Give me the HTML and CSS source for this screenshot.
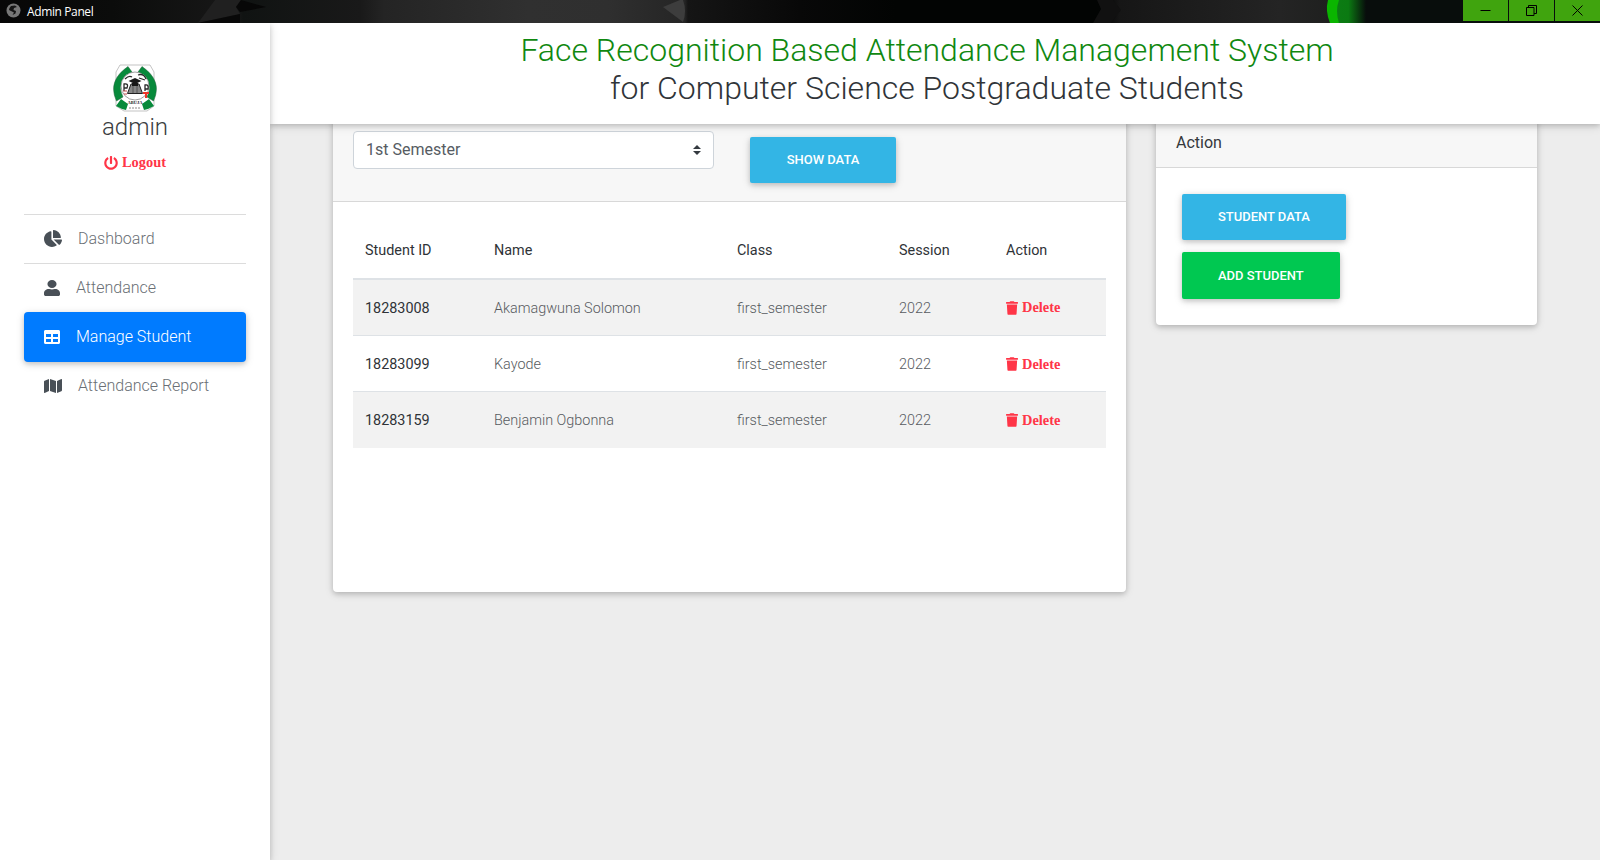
FILE: index.html
```html
<!DOCTYPE html>
<html lang="en">
<head>
<meta charset="utf-8">
<title>Admin Panel</title>
<link rel="stylesheet" href="styles.css">
</head>
<body>
<svg class="defs" width="0" height="0">
  <symbol id="trash" viewBox="0 0 448 512"><path d="M432 32H312l-9.4-18.7A24 24 0 0 0 281.100 0H166.800a23.720 23.720 0 0 0-21.400 13.300L136 32H16A16 16 0 0 0 0 48v32a16 16 0 0 0 16 16h416a16 16 0 0 0 16-16V48a16 16 0 0 0-16-16zM53.200 467a48 48 0 0 0 47.900 45h245.800a48 48 0 0 0 47.900-45L416 128H32z"/></symbol>
</svg>
<div class="titlebar">
  <svg class="titlebar-art" width="1600" height="23" viewBox="0 0 1600 23">
    <defs>
      <linearGradient id="base" x1="0" x2="1">
        <stop offset="0" stop-color="#070707"/><stop offset=".07" stop-color="#0b0c0b"/><stop offset=".148" stop-color="#181818"/><stop offset=".152" stop-color="#101312"/><stop offset=".225" stop-color="#191919"/><stop offset=".24" stop-color="#242424"/><stop offset=".33" stop-color="#303030"/><stop offset=".38" stop-color="#2f2f2f"/><stop offset=".428" stop-color="#252525"/><stop offset=".43" stop-color="#151515"/><stop offset=".5" stop-color="#080808"/><stop offset=".56" stop-color="#020403"/><stop offset=".688" stop-color="#020403"/><stop offset=".7" stop-color="#161616"/><stop offset=".8" stop-color="#242424"/><stop offset=".83" stop-color="#1f201f"/>
      </linearGradient>
      <linearGradient id="glow" x1="0" x2="1">
        <stop offset="0" stop-color="#0c7c14"/><stop offset=".45" stop-color="#0b7a12"/><stop offset="1" stop-color="#080d0c"/>
      </linearGradient>
    </defs>
    <rect width="1600" height="23" fill="url(#base)"/>
    <path d="M198 23L240 14L236 7L241 0H215z" fill="#202020"/>
    <path d="M198 23L240 14V23z" fill="#080808"/>
    <path d="M236 7L241 0L266 7L240 12z" fill="#070707"/>
    <path d="M663 7L680 0H683Q687 11 683 22z" fill="#3d3d3d"/>
    <path d="M1097 0H1113L1121 10L1111 23H1093L1101 9z" fill="#111"/>
    <rect x="1334" width="266" height="23" fill="#080d0c"/>
    <rect x="1334" width="32" height="23" fill="url(#glow)"/>
    <path d="M1328 0H1339Q1335 11 1339 23H1330Q1325 11 1328 0z" fill="#0ab500"/>
  </svg>
  <svg class="globe" width="15" height="15" viewBox="0 0 15 15"><circle cx="7.500" cy="7.500" r="7" fill="#777"/><path d="M5 3L9 2.500L11 4L8 5L7.500 7L10 8L9.500 10.500L6.500 12L8 9.500L3 7L3.500 5z" fill="#151515"/></svg>
  <span class="titlebar-name">Admin Panel</span>
  <div class="window-buttons">
    <span class="window-button"><svg width="11" height="11"><path d="M.500 5.500h10" stroke="#000"/></svg></span>
    <span class="window-button"><svg width="11" height="11" fill="none" stroke="#000"><path d="M.500 2.500h7.500v8h-7.500zM2.500 2.500v-2h8v8h-2.500"/></svg></span>
    <span class="window-button"><svg width="11" height="11"><path d="M.500.500l10 10M10.500.500l-10 10" stroke="#000"/></svg></span>
  </div>
</div>
<div class="app">
  <aside class="sidebar">
    <div class="profile">
      <svg class="logo" width="44" height="48" viewBox="0 0 44 48">
        <path d="M7 1H37L41 8V42L34 47H11L3 42V8z" fill="#fff" stroke="#aaa" stroke-width=".7"/>
        <path d="M15 2.500Q-6 17 3.500 37L10 33Q2 18 19 8zM29 2.500Q50 17 40.500 37L34 33Q42 18 25 8z" fill="#078a3b" stroke="#27633f" stroke-width=".5"/>
        <path d="M3 42L8 35L15 40L13 46Q8 45 3 42zM41 42L36 35L29 40L31 46Q36 45 41 42z" fill="#078a3b"/>
        <circle cx="22" cy="22" r="14" fill="#fff" stroke="#777" stroke-width=".7"/>
        <path d="M14.500 29.500L18 20H26L29.500 29.500z" fill="#888" stroke="#222"/>
        <path d="M20 21v8M24 21v8" stroke="#555"/>
        <path d="M15.500 17L22 14L28.500 17L22 20zM19 19h6v3h-6z" fill="#181818"/>
        <path d="M11 27V20q5-1 3 4h-3M12 15q4-4 7-2M25 11q6-2 8 4M26 14l6 2M32 27V21q4-1 3 4h-3" fill="none" stroke="#292929" stroke-width="1.300"/>
        <path d="M10 27h4M11 30h3" stroke="#c34c4c"/>
        <path d="M30 28h6v2h-2v4h-2v-4h-2z" fill="#ef3527"/>
        <text class="logo-text" x="22" y="39.500" text-anchor="middle">ABUJA</text>
        <path d="M16 44h12" stroke="#888" stroke-dasharray="2 1"/>
      </svg>
      <h4 class="user-name">admin</h4>
      <a class="danger-link logout"><svg width="14" height="14" viewBox="0 0 512 512"><path d="M400 54.100c63 45 104 118.600 104 201.900 0 136.800-110.800 247.700-247.500 248C120 504.300 8.200 393 8 256.400 7.900 173.100 48.900 99.300 111.800 54.200c11.700-8.300 28-4.800 35 7.700L162.600 90c5.900 10.500 3.100 23.800-6.600 31-41.500 30.800-68 79.600-68 134.900-.1 92.300 74.500 168.100 168 168.100 91.600 0 168.600-74.200 168-169.100-.3-51.800-24.700-101.800-68.100-134-9.700-7.200-12.400-20.500-6.500-30.900l15.800-28.100c7-12.400 23.200-16.100 34.800-7.800zM296 264V24c0-13.300-10.700-24-24-24h-32c-13.300 0-24 10.700-24 24v240c0 13.300 10.700 24 24 24h32c13.300 0 24-10.700 24-24z"/></svg>Logout</a>
    </div>
    <nav class="nav">
      <a class="nav-item ruled"><svg width="18" height="17" viewBox="0 0 544 512"><path d="M527.790 288H290.500l158.030 158.030c6.040 6.040 15.980 6.530 22.190.68 38.700-36.460 65.320-85.610 73.130-140.860 1.340-9.460-6.510-17.850-16.060-17.850zm-15.830-64.800C503.720 103.740 408.260 8.280 288.800.04 279.680-.59 272 7.100 272 16.240V240h223.770c9.140 0 16.820-7.680 16.190-16.800zM224 288V50.710c0-9.550-8.390-17.400-17.840-16.060C86.990 51.490-4.100 155.600.14 280.370 4.500 408.510 114.830 513.590 243.030 511.980c50.400-.63 96.970-16.870 135.260-44.030 7.900-5.600 8.420-17.230 1.570-24.080L224 288z"/></svg>Dashboard</a>
      <a class="nav-item"><svg width="16" height="16" viewBox="0 0 448 512" preserveAspectRatio="none"><path d="M224 256c70.700 0 128-57.300 128-128S294.700 0 224 0 96 57.300 96 128s57.300 128 128 128zm89.600 32h-16.700c-22.200 10.200-46.900 16-72.900 16s-50.600-5.800-72.900-16h-16.700C60.200 288 0 348.200 0 422.400V464c0 26.500 21.500 48 48 48h352c26.500 0 48-21.500 48-48v-41.600c0-74.200-60.200-134.400-134.400-134.400z"/></svg>Attendance</a>
      <a class="nav-item active"><svg width="16" height="16" viewBox="0 0 512 512"><path d="M464 32H48C21.490 32 0 53.490 0 80v352c0 26.510 21.490 48 48 48h416c26.510 0 48-21.490 48-48V80c0-26.510-21.490-48-48-48zM224 416H64v-96h160v96zm0-160H64v-96h160v96zm224 160H288v-96h160v96zm0-160H288v-96h160v96z"/></svg>Manage Student</a>
      <a class="nav-item"><svg width="18" height="16" viewBox="0 0 576 512"><path d="M0 117.660v346.320c0 11.320 11.430 19.060 21.940 14.860L160 416V32L20.120 87.950A32.006 32.006 0 0 0 0 117.660zM192 416l192 64V96L192 32v384zM554.060 33.160L416 96v384l139.880-55.950A31.996 31.996 0 0 0 576 394.340V48.020c0-11.320-11.430-19.060-21.940-14.860z"/></svg>Attendance Report</a>
    </nav>
  </aside>
  <div class="content">
    <header class="header">
      <h2 class="heading"><span class="heading-green">Face Recognition Based Attendance Management System</span><br>for Computer Science Postgraduate Students</h2>
    </header>
    <main class="main">
      <section class="card students">
        <div class="card-header filters">
          <div class="select">1st Semester<svg width="8" height="10" viewBox="0 0 4 5"><path fill="#343a40" d="M2 0L0 2h4zm0 5L0 3h4z"/></svg></div>
          <button class="btn">Show Data</button>
        </div>
        <div class="card-body">
          <table class="table">
            <colgroup><col class="col-id"><col class="col-name"><col class="col-class"><col class="col-session"><col></colgroup>
            <thead><tr><th>Student ID</th><th>Name</th><th>Class</th><th>Session</th><th>Action</th></tr></thead>
            <tbody>
              <tr><th>18283008</th><td>Akamagwuna Solomon</td><td>first_semester</td><td>2022</td><td><a class="danger-link"><svg width="12" height="14"><use href="#trash"/></svg>Delete</a></td></tr>
              <tr><th>18283099</th><td>Kayode</td><td>first_semester</td><td>2022</td><td><a class="danger-link"><svg width="12" height="14"><use href="#trash"/></svg>Delete</a></td></tr>
              <tr><th>18283159</th><td>Benjamin Ogbonna</td><td>first_semester</td><td>2022</td><td><a class="danger-link"><svg width="12" height="14"><use href="#trash"/></svg>Delete</a></td></tr>
            </tbody>
          </table>
        </div>
      </section>
      <section class="card actions">
        <div class="card-header">Action</div>
        <div class="card-body action-list">
          <button class="btn">Student Data</button>
          <button class="btn btn-green">Add Student</button>
        </div>
      </section>
    </main>
  </div>
</div>
</body>
</html>
```
FILE: styles.css
```css
* { box-sizing: border-box; }
body {
  margin: 0;
  height: 860px;
  overflow: hidden;
  display: flex;
  flex-direction: column;
  background: #ededed;
  color: #212529;
  font: 300 16px/1.5 Roboto, sans-serif;
}
svg { flex: none; }
.defs { position: absolute; }

.titlebar {
  position: relative;
  z-index: 4;
  height: 23px;
  display: flex;
  align-items: center;
  padding-left: 6px;
  color: #fff;
  background: #0a0a0a;
}
.titlebar-art { position: absolute; left: 0; top: 0; }
.globe { position: relative; top: -1px; }
.titlebar-name {
  position: relative;
  margin-left: 6px;
  font: 400 12px/23px "Open Sans", sans-serif;
  letter-spacing: -.38px;
}
.window-buttons {
  position: relative;
  margin-left: auto;
  align-self: flex-start;
  display: flex;
  gap: 1px;
}
.window-button {
  width: 45px;
  height: 21px;
  display: flex;
  align-items: center;
  justify-content: center;
  background: #40a40e;
}

.app { flex: 1; display: flex; min-height: 0; }
.sidebar {
  position: relative;
  z-index: 3;
  width: 270px;
  padding: 41px 24px 0;
  background: #fff;
  box-shadow: 0 2px 5px rgba(0,0,0,.16), 0 2px 10px rgba(0,0,0,.12);
}
.profile {
  height: 150px;
  display: flex;
  flex-direction: column;
  align-items: center;
}
.logo-text { font: 700 4.5px "Liberation Serif", serif; fill: #222; }
.user-name {
  margin: 1px 0 0;
  color: #3a3d41;
  font-size: 24px;
  font-weight: 300;
  line-height: 29px;
}
.danger-link {
  display: inline-flex;
  align-items: center;
  gap: 4px;
  color: #ff3547;
  fill: currentColor;
  font: 700 14.4px/21px "Liberation Serif", serif;
}
.logout { margin-top: 10px; }

.nav-item {
  display: flex;
  align-items: center;
  gap: 16px;
  height: 48px;
  padding-left: 20px;
  color: #6a6f75;
}
.nav-item svg { fill: #495057; }
.nav-item.ruled {
  height: 50px;
  border-top: 1px solid #dcdcdc;
  border-bottom: 1px solid #dcdcdc;
}
.nav-item.ruled svg { margin-top: -2px; }
.nav-item.active {
  height: 50px;
  color: #fff;
  background: #007bff;
  border-radius: 4px;
  box-shadow: 0 2px 5px rgba(0,0,0,.16), 0 2px 10px rgba(0,0,0,.12);
}
.nav-item.active svg { fill: #fff; }

.content { flex: 1; }
.header {
  position: relative;
  z-index: 2;
  height: 101px;
  padding-top: 8px;
  background: #fff;
  text-align: center;
  box-shadow: 0 2px 5px rgba(0,0,0,.16), 0 2px 10px rgba(0,0,0,.12);
}
.heading {
  margin: 0 0 0 -16px;
  color: #303438;
  font-size: 32px;
  font-weight: 300;
  line-height: 38.4px;
}
.heading-green { color: #108810; }

.main {
  display: flex;
  align-items: flex-start;
  gap: 30px;
  padding-left: 63px;
}
.card {
  margin-top: -5px;
  background: #fff;
  border-radius: 4px;
  box-shadow: 0 2px 5px rgba(0,0,0,.16), 0 2px 10px rgba(0,0,0,.12);
}
.card-header {
  padding: 12px 20px;
  background: #f7f7f7;
  border-bottom: 1px solid #d8d8d8;
  color: #34383c;
  font-weight: 400;
}
.card-body { padding: 20px; }
.students { width: 793px; height: 473px; }
.actions { width: 381px; }
.filters {
  display: flex;
  align-items: flex-start;
  gap: 36px;
  height: 83px;
}
.select {
  width: 361px;
  height: 38px;
  padding: 0 12px;
  display: flex;
  align-items: center;
  justify-content: space-between;
  background: #fff;
  border: 1px solid #ced4da;
  border-radius: 4px;
  color: #565c63;
}
.filters .btn { margin-top: 6px; width: 146px; }
.btn {
  height: 46px;
  padding: 0 36px;
  border: 0;
  border-radius: 2px;
  background: #33b5e5;
  color: #fff;
  font: 500 12.96px/1.5 Roboto, sans-serif;
  text-transform: uppercase;
  white-space: nowrap;
  box-shadow: 0 2px 5px rgba(0,0,0,.16), 0 2px 10px rgba(0,0,0,.12);
}
.btn-green { height: 47px; background: #00c851; }
.action-list {
  display: flex;
  flex-direction: column;
  align-items: flex-start;
  gap: 12px;
  padding: 26px;
}

.table {
  width: 753px;
  table-layout: fixed;
  border-collapse: collapse;
  font-size: 14.4px;
  line-height: 21.6px;
}
.table th, .table td {
  padding: 17.6px 12px 16px;
  text-align: left;
  border-top: 1px solid #dee2e6;
}
.table th { color: #2f3337; font-weight: 400; }
.table td { color: #575b60; }
.table thead th { padding: 18px 12px 16.4px; border-top: 0; border-bottom: 2px solid #dee2e6; }
.table tbody tr:nth-child(odd) { background: #f2f2f2; }
.table .danger-link { display: flex; margin-top: -1px; }
.col-id { width: 129px; }
.col-name { width: 243px; }
.col-class { width: 162px; }
.col-session { width: 107px; }
```
